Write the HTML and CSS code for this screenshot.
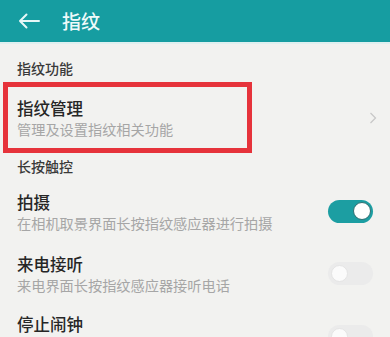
FILE: index.html
```html
<!DOCTYPE html>
<html lang="zh-CN">
<head>
<meta charset="utf-8">
<link rel="stylesheet" href="styles.css">
</head>
<body>
<header class="appbar">
  <svg class="back" width="22" height="16" viewBox="0 0 22 16"><path d="M21 8H2M8.5 1.5L2 8l6.5 6.5" fill="none" stroke="#e6f7f7" stroke-width="2" stroke-linecap="round" stroke-linejoin="round"/></svg>
  <span class="appbar-title">指纹</span>
</header>
<main class="list">
  <div class="section first">指纹功能</div>
  <div class="row nav">
    <div class="text">
      <div class="title">指纹管理</div>
      <div class="sub">管理及设置指纹相关功能</div>
    </div>
    <svg class="chev" width="8" height="12" viewBox="0 0 8 12"><path d="M1.5 1l5 5-5 5" fill="none" stroke="#c8c8c8" stroke-width="1.3"/></svg>
    <div class="highlight"></div>
  </div>
  <div class="section second">长按触控</div>
  <div class="row">
    <div class="text">
      <div class="title">拍摄</div>
      <div class="sub">在相机取景界面长按指纹感应器进行拍摄</div>
    </div>
    <div class="switch on"><span class="knob"></span></div>
  </div>
  <div class="row">
    <div class="text">
      <div class="title">来电接听</div>
      <div class="sub">来电界面长按指纹感应器接听电话</div>
    </div>
    <div class="switch"><span class="knob"></span></div>
  </div>
  <div class="row last">
    <div class="text">
      <div class="title">停止闹钟</div>
    </div>
    <div class="switch"><span class="knob"></span></div>
  </div>
</main>
</body>
</html>
```
FILE: styles.css
```css
html, body {
  margin: 0;
  padding: 0;
}
body {
  width: 390px;
  height: 337px;
  overflow: hidden;
  background: #f2f2f0;
  font-family: "Noto Sans CJK SC", "Noto Sans", sans-serif;
}
.appbar {
  height: 42px;
  background: #169da1;
  display: flex;
  align-items: center;
  padding-left: 18px;
  border-bottom: 2px solid #dff0f0;
}
.back {
  display: block;
}
.appbar-title {
  margin-left: 22px;
  font-size: 19px;
  line-height: 22px;
  color: #eefafa;
  font-weight: 500;
}
.list {
  display: flex;
  flex-direction: column;
}
.section {
  padding-left: 17px;
  font-size: 14px;
  line-height: 14px;
  color: #3a3a3a;
  font-weight: 500;
}
.section.first {
  padding-top: 17px;
  padding-bottom: 7px;
}
.section.second {
  padding-top: 6px;
  padding-bottom: 7px;
}
.row {
  position: relative;
  display: flex;
  align-items: center;
  justify-content: space-between;
  height: 62px;
  padding: 0 17px;
  box-sizing: border-box;
}
.row.nav {
  height: 71px;
  padding-right: 13px;
}
.row.last {
  align-items: flex-start;
  padding-top: 11px;
  height: 33px;
  overflow: hidden;
}
.row.last .title {
  line-height: 18px;
}
.row.last .switch {
  margin-top: 10px;
}
.text {
  display: flex;
  flex-direction: column;
  gap: 3px;
}
.title {
  font-size: 16.5px;
  line-height: 20px;
  color: #262626;
  font-weight: 500;
}
.sub {
  font-size: 14.2px;
  line-height: 16px;
  color: #a6a6a6;
}
.chev {
  display: block;
}
.highlight {
  position: absolute;
  left: 3px;
  top: 0;
  width: 249px;
  height: 71px;
  box-sizing: border-box;
  border: 5px solid #e6333b;
}
.switch {
  width: 45px;
  height: 23px;
  border-radius: 12px;
  background: #ebebeb;
  display: flex;
  align-items: center;
  padding: 0 3px;
  box-sizing: border-box;
  flex-shrink: 0;
}
.switch .knob {
  width: 17px;
  height: 17px;
  border-radius: 50%;
  background: #fbfbfb;
  box-sizing: border-box;
  border: 1px solid #e4e4e4;
}
.switch.on {
  background: #1c9ea2;
  justify-content: flex-end;
  padding: 0 2px;
}
.switch.on .knob {
  width: 18px;
  height: 18px;
  background: #ffffff;
  border: 1.5px solid #2f6f72;
}
```
